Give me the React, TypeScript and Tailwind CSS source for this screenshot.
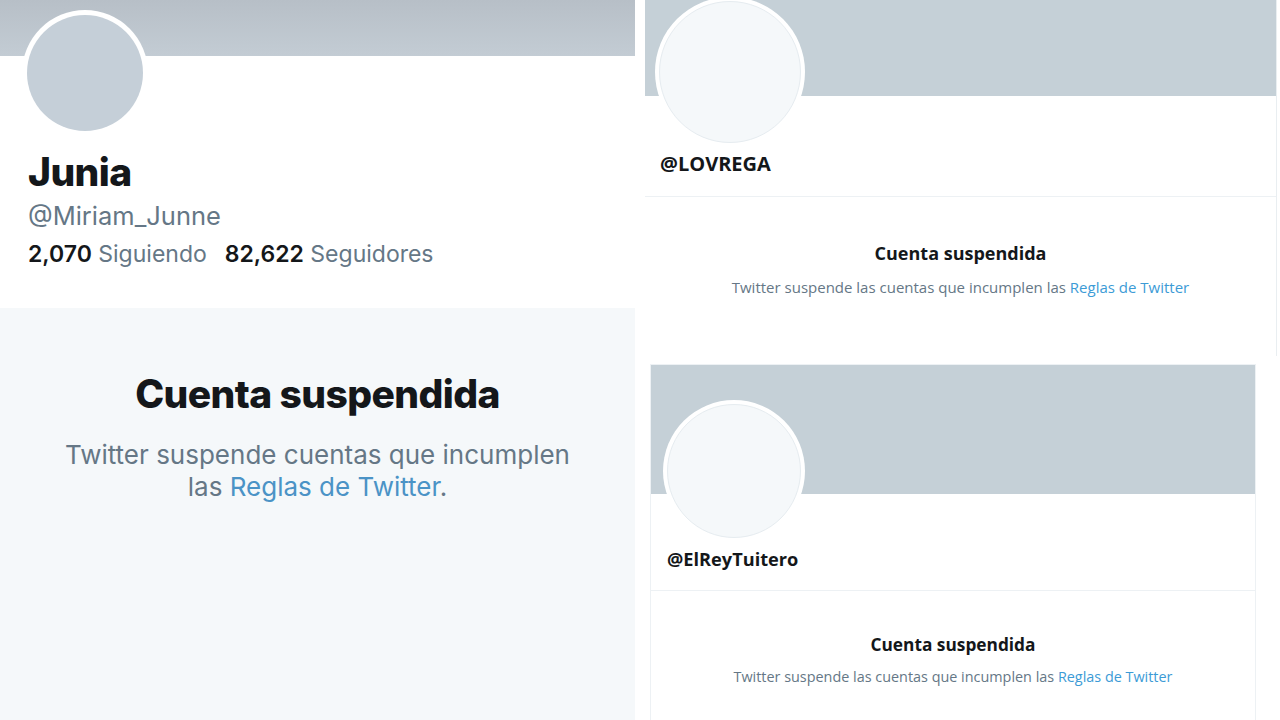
const sf = { fontFamily: 'Inter, "Liberation Sans", sans-serif' };
const seg = { fontFamily: '"Open Sans", "Noto Sans", sans-serif' };

function IosProfile() {
  return (
    <div className="w-[635px] h-[720px] flex flex-col shrink-0" style={sf}>
      <div className="h-[56px] bg-gradient-to-b from-[#b7bfc7] to-[#c3ccd4]" />
      <div className="bg-white h-[252px] px-[22px] flex flex-col">
        <div className="-mt-[46px] w-[126px] h-[126px] rounded-full bg-white p-[5px]">
          <div className="w-full h-full rounded-full bg-[#c5cfd8]" />
        </div>
        <div className="mt-[13px] pl-[6px] text-[39px] leading-[46px] font-extrabold text-[#14171a] tracking-[-0.6px]">
          Junia
        </div>
        <div className="mt-[5px] pl-[6px] text-[25.5px] leading-[32px] text-[#657786]">@Miriam_Junne</div>
        <div className="mt-[7px] pl-[6px] text-[23px] leading-[30px] text-[#657786] flex gap-[18px]">
          <span>
            <span className="font-semibold text-[#14171a]">2,070</span> Siguiendo
          </span>
          <span>
            <span className="font-semibold text-[#14171a]">82,622</span> Seguidores
          </span>
        </div>
      </div>
      <div className="flex-1 bg-[#f5f8fa] flex flex-col items-center pt-[64px]">
        <div className="text-[39px] leading-[44px] font-extrabold text-[#14171a] tracking-[-0.6px]">Cuenta suspendida</div>
        <div className="mt-[23px] w-[540px] text-center text-[26px] leading-[32px] text-[#657786]">
          Twitter suspende cuentas que incumplen
          <br />
          las <span className="text-[#4b93c6]">Reglas de Twitter</span>.
        </div>
      </div>
    </div>
  );
}

function WebProfile({
  handle,
  bannerH,
  avatar,
  avatarTop,
  avatarLeft,
  handleCls,
  bodyTop,
  titleCls,
  textCls,
}: {
  handle: string;
  bannerH: string;
  avatar: string;
  avatarTop: string;
  avatarLeft: string;
  handleCls: string;
  bodyTop: string;
  titleCls: string;
  textCls: string;
}) {
  return (
    <div className="flex flex-col bg-white" style={seg}>
      <div className={`${bannerH} bg-[#c5d0d7]`} />
      <div className={`${avatarTop} ${avatarLeft} ${avatar} rounded-full bg-white p-[4px]`}>
        <div className="w-full h-full rounded-full bg-[#f5f8fa] border border-[#e6ecf0]" />
      </div>
      <div className={`${handleCls} font-bold text-[#14171a] border-b border-[#edf1f4]`}>{handle}</div>
      <div className={`flex flex-col items-center ${bodyTop}`}>
        <div className={`${titleCls} font-bold text-[#14171a]`}>Cuenta suspendida</div>
        <div className={`${textCls} text-[#657786]`}>
          Twitter suspende las cuentas que incumplen las{' '}
          <span className="text-[#3c9bd6]">Reglas de Twitter</span>
        </div>
      </div>
    </div>
  );
}

export default function App() {
  return (
    <div className="w-[1280px] h-[720px] bg-white flex overflow-hidden">
      <IosProfile />
      <div className="w-[645px] flex flex-col pl-[10px]">
        <div className="w-[632px] h-[356px] border-r border-[#e9eef1]">
          <WebProfile
            handle="@LOVREGA"
            bannerH="h-[96px]"
            avatar="w-[150px] h-[150px]"
            avatarTop="-mt-[99px]"
            avatarLeft="ml-[10px]"
            handleCls="mt-[3px] pl-[15px] pb-[18px] text-[20px] leading-[28px]"
            bodyTop="pt-[44px]"
            titleCls="text-[18px] leading-[24px]"
            textCls="mt-[12px] text-[15px] leading-[20px]"
          />
        </div>
        <div className="mt-[8px] ml-[5px] w-[606px] flex-1 border-t border-x border-[#edf1f4]">
          <WebProfile
            handle="@ElReyTuitero"
            bannerH="h-[129px]"
            avatar="w-[142px] h-[142px]"
            avatarTop="-mt-[94px]"
            avatarLeft="ml-[12px]"
            handleCls="mt-[4px] pl-[16px] pb-[18px] text-[18.2px] leading-[26px]"
            bodyTop="pt-[42px]"
            titleCls="text-[17.3px] leading-[24px]"
            textCls="mt-[10px] text-[14.4px] leading-[20px]"
          />
        </div>
      </div>
    </div>
  );
}
